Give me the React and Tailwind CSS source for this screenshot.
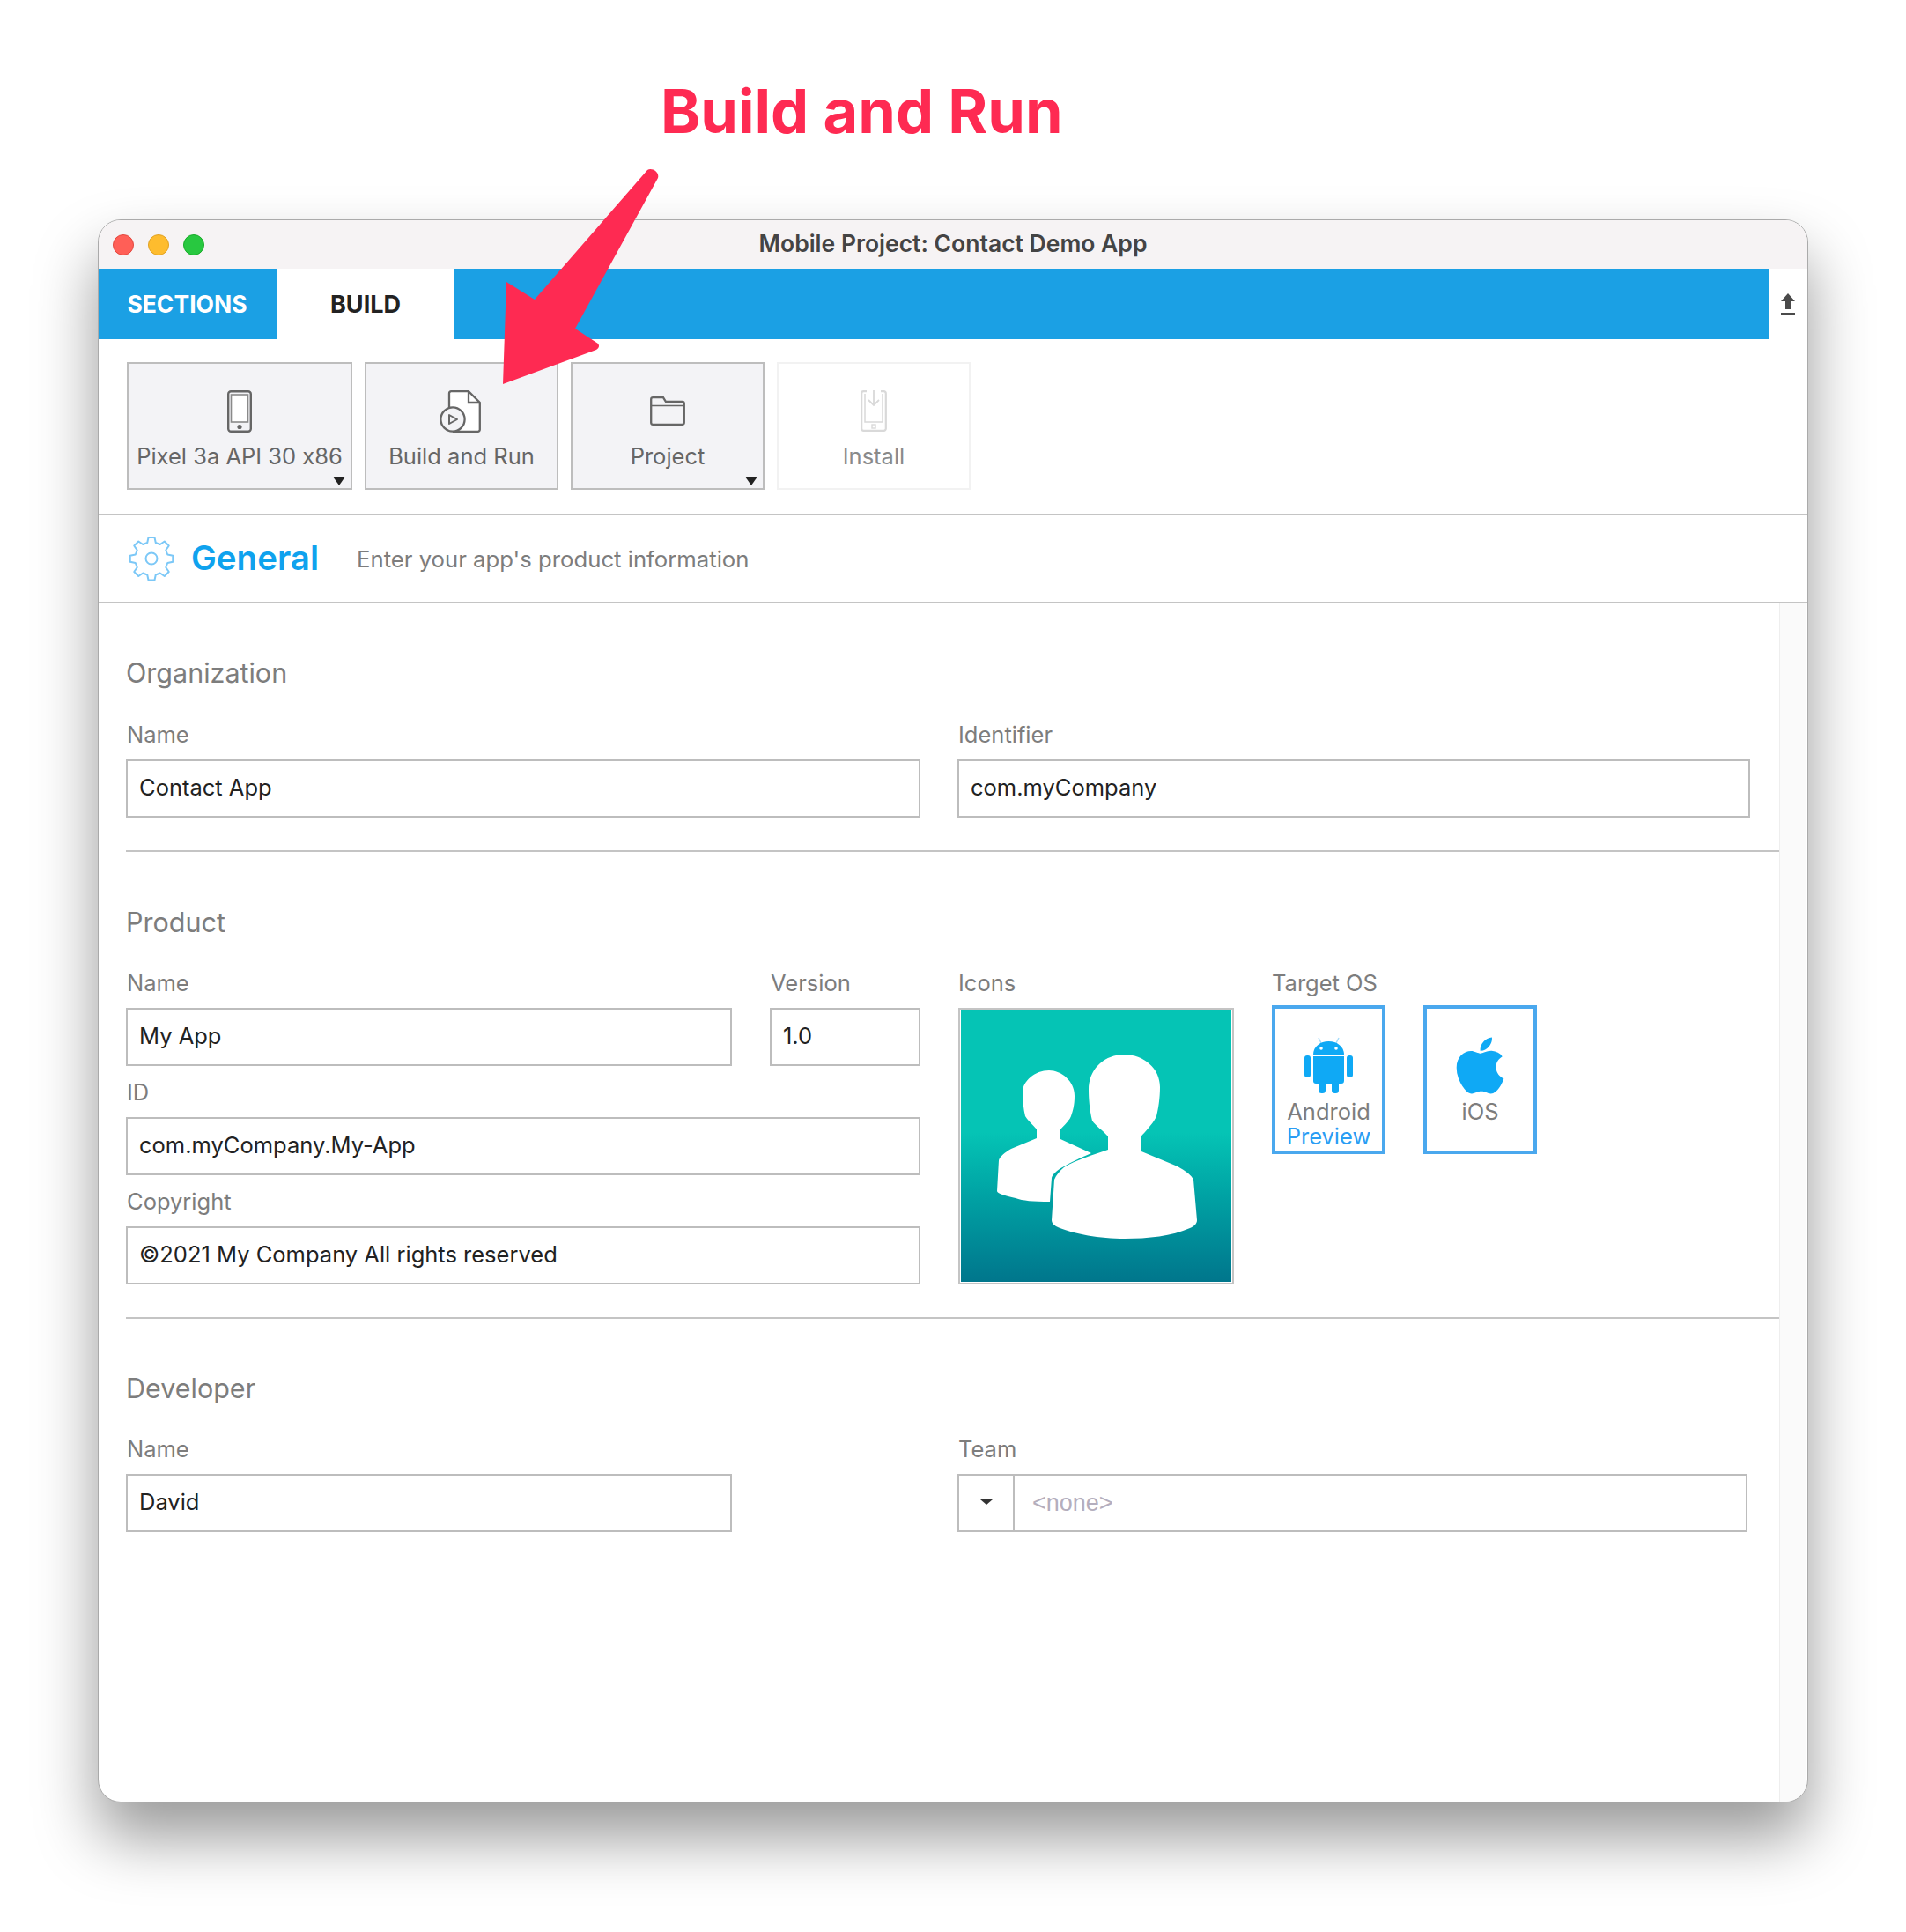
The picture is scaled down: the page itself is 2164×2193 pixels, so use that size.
import React from 'react'
import { FaApple } from 'react-icons/fa'

const Field = ({ label, value, className = '' }) => (
  <div className={className}>
    <div className="h-[44px] pl-px text-[25.5px] leading-[32px] text-[#7d7d7d]">{label}</div>
    <div className="flex h-[66px] items-center border-2 border-[#bdbdbd] pb-[2px] pl-[13px] text-[25.5px] text-[#222]">{value}</div>
  </div>
)

const Heading = ({ children }) => (
  <div className="text-[30.5px] leading-[38px] text-[#7d7d7d]">{children}</div>
)

const Caret = () => (
  <div className="absolute right-[6px] bottom-[3px] h-0 w-0 border-x-[7px] border-t-[10px] border-x-transparent border-t-[#222]" />
)

const ToolButton = ({ label, icon, caret, disabled, className = '' }) => (
  <div className={`relative flex h-[145px] flex-col items-center border-2 ${disabled ? 'border-[#f2f2f2] bg-white text-[#8a8a8a]' : 'border-[#bdbdbd] bg-[#f3f3f6] text-[#666]'} ${className}`}>
    <div className="mt-[16px] flex h-[75px] items-center justify-center">{icon}</div>
    <div className="text-[25.5px] leading-[28px] [font-feature-settings:'calt'_0]">{label}</div>
    {caret && <Caret />}
  </div>
)

const PhoneIcon = () => (
  <svg width="28" height="48" viewBox="0 0 28 48" fill="none" stroke="#666" strokeWidth="2.4">
    <rect x="1.2" y="1.2" width="25.6" height="45.6" rx="3" />
    <rect x="4.5" y="5" width="19" height="31" fill="#fff" stroke="#8a8a8a" strokeWidth="1.6" />
    <circle cx="14" cy="41.5" r="2.6" fill="#666" stroke="none" />
  </svg>
)

const BuildIcon = () => (
  <svg className="mr-[4px]" width="47" height="48" viewBox="0 0 47 48" fill="none" stroke="#666" strokeWidth="2.3">
    <path d="M11 20V3.5A2.2 2.2 0 0 1 13.2 1.2H33L45.8 14V44.5A2.2 2.2 0 0 1 43.6 46.8H15" fill="#fff" />
    <path d="M33 1.2V14H45.8" />
    <circle cx="15" cy="33" r="13.6" fill="#f3f3f6" />
    <path d="M11 28L20 33L11 38Z" strokeWidth="2" strokeLinejoin="round" />
  </svg>
)

const FolderIcon = () => (
  <svg width="40" height="33" viewBox="0 0 40 33" fill="none" stroke="#666" strokeWidth="2.3">
    <path d="M1.2 30V3A2 2 0 0 1 3.2 1.2H15L18 6H36.5A2.3 2.3 0 0 1 38.8 8.3V29.5A2.3 2.3 0 0 1 36.5 31.8H3.2A2 2 0 0 1 1.2 30Z" />
    <path d="M1.2 10.5H38.8" strokeWidth="1.6" />
  </svg>
)

const InstallIcon = () => (
  <svg width="30" height="47" viewBox="0 0 30 47" fill="none" stroke="#d9d9d9" strokeWidth="2.2">
    <path d="M7 1.2H3.5A2.3 2.3 0 0 0 1.2 3.5V43.5A2.3 2.3 0 0 0 3.5 45.8H26.5A2.3 2.3 0 0 0 28.8 43.5V3.5A2.3 2.3 0 0 0 26.5 1.2H23" />
    <path d="M5 4V36H25V4" strokeWidth="1.5" />
    <path d="M15 0V17M9 11L15 17L21 11" strokeWidth="1.8" />
    <rect x="13" y="39" width="4" height="4" strokeWidth="1.4" />
  </svg>
)

const GearIcon = () => (
  <svg width="60" height="60" viewBox="0 0 24 24" fill="none" stroke="#7cc8f7" strokeWidth="0.8" strokeLinejoin="round">
    <path d="M10.6 2.4h2.8l.5 2.4 2 .8 2-1.4 2 2-1.4 2 .8 2 2.4.5v2.8l-2.4.5-.8 2 1.4 2-2 2-2-1.4-2 .8-.5 2.4h-2.8l-.5-2.4-2-.8-2 1.4-2-2 1.4-2-.8-2-2.4-.5v-2.8l2.4-.5.8-2-1.4-2 2-2 2 1.4 2-.8z" />
    <circle cx="12" cy="12" r="2.6" />
  </svg>
)

const AndroidIcon = () => (
  <svg width="55" height="64" viewBox="0 0 55 64" fill="#0fa9f5">
    <path d="M16 1l3 6M39 1l-3 6" stroke="#a6dcfa" strokeWidth="1.5" />
    <path d="M10 20C10 11 18 5 27.5 5S45 11 45 20z" />
    <path d="M10 22H45V50A3 3 0 0 1 42 53H13A3 3 0 0 1 10 50z" />
    <rect x="0" y="21" width="7" height="25" rx="3" />
    <rect x="48" y="21" width="7" height="25" rx="3" />
    <rect x="16" y="50" width="8" height="14" rx="3.5" />
    <rect x="31" y="50" width="8" height="14" rx="3.5" />
    <circle cx="19" cy="13" r="1.8" fill="#fff" />
    <circle cx="36" cy="13" r="1.8" fill="#fff" />
  </svg>
)

const TargetBox = ({ icon, label, sub }) => (
  <div className="flex h-[169px] w-[129px] flex-col items-center border-[4px] border-[#4aa8ee] pt-[32px]">
    <div className="flex h-[64px] items-center justify-center">{icon}</div>
    <div className="mt-[7px] text-[25.5px] leading-[28px] text-[#7d7d7d]">{label}</div>
    {sub && <div className="text-[25.5px] leading-[28px] text-[#2a9df4]">{sub}</div>}
  </div>
)

const AppIcon = () => (
  <div className="h-[314px] w-[313px] border-2 border-[#c4c4c4] p-px">
    <div className="h-full w-full bg-gradient-to-b from-[#05c4b5] from-[45%] to-[#00768c]">
      <svg width="308" height="309" viewBox="0 0 308 309" fill="#fff">
        <path d="M100 68C114 68 129 80 129 97C129 108 127 114 125 120C122 127 116 131 113 135V146L148 162C134 168 124 173 117 177C108 182 104 186 103 190L101 217C82 217 70 216 62 213C50 210 41 208 41 205L43 170C44 166 50 161 57 157L86 145V135C80 128 76 125 73 120C71 112 70 102 70 93C70 80 84 68 100 68Z" />
        <path d="M185 50C208 50 226 66 226 87C226 100 224 112 222 120C219 127 213 133 209 138C206 141 205 142 205 143V160L246 177C255 182 262 187 264 192L268 238C268 242 265 245 260 247C240 256 212 259 186 259C155 259 125 253 108 245C105 243 103 241 103 238L106 192C108 187 112 182 117 178C130 170 150 164 167 158V143C161 136 153 131 149 125C146 112 145 100 145 90C145 66 163 50 185 50Z" />
      </svg>
    </div>
  </div>
)

export default function App() {
  return (
    <div className="relative h-[2193px] w-[2164px] overflow-hidden bg-white font-['Inter',sans-serif]">
      <div className="pt-[85px] pb-[1px] pl-[750px] text-[68.5px] leading-[83px] font-bold text-[#fe2a52]">
        Build and Run
      </div>

      <div className="mt-[80px] ml-[111px] flex h-[1797px] w-[1942px] flex-col overflow-hidden rounded-[26px] border border-[#aaa] bg-white shadow-[0_40px_70px_rgba(0,0,0,0.4)]">
        <div className="relative flex h-[55px] shrink-0 items-center justify-center bg-[#f6f3f4] pb-[2px] text-[26.5px] font-semibold text-[#444]">
          <div className="absolute top-[16px] left-[16px] flex gap-[16px]">
            <div className="h-[24px] w-[24px] rounded-full border border-[#e2483f] bg-[#ff5f57]" />
            <div className="h-[24px] w-[24px] rounded-full border border-[#dfa123] bg-[#febc2e]" />
            <div className="h-[24px] w-[24px] rounded-full border border-[#1aab29] bg-[#28c840]" />
          </div>
          Mobile Project: Contact Demo App
        </div>

        <div className="flex h-[80px] shrink-0 items-stretch">
          <div className="flex w-[203px] items-center justify-center bg-[#1ba0e4] pt-[2px] pr-[2px] text-[26.5px] font-bold text-white">SECTIONS</div>
          <div className="flex w-[200px] items-center justify-center bg-white pt-[2px] text-[27px] font-bold text-[#222]">BUILD</div>
          <div className="flex-1 bg-[#1ba0e4]" />
          <div className="flex w-[44px] items-center justify-center">
            <svg width="16" height="24" viewBox="0 0 16 24" fill="#4a4a4a">
              <path d="M8 0L16 9H11V18H5V9H0Z" />
              <rect x="0" y="22" width="16" height="2" />
            </svg>
          </div>
        </div>

        <div className="flex h-[200px] shrink-0 gap-[14px] border-b-2 border-[#c4c4c4] pt-[26px] pl-[32px]">
          <ToolButton label="Pixel 3a API 30 x86" icon={<PhoneIcon />} caret className="w-[256px]" />
          <ToolButton label="Build and Run" icon={<BuildIcon />} className="w-[220px]" />
          <ToolButton label="Project" icon={<FolderIcon />} caret className="w-[220px]" />
          <ToolButton label="Install" icon={<InstallIcon />} disabled className="w-[220px]" />
        </div>

        <div className="flex h-[100px] shrink-0 items-center border-b-2 border-[#c4c4c4] pl-[30px]">
          <GearIcon />
          <div className="ml-[15px] text-[38.5px] font-semibold text-[#0fa2ee]">General</div>
          <div className="ml-[43px] pt-[2px] text-[25.7px] text-[#7d7d7d]">Enter your app's product information</div>
        </div>

        <div className="relative flex-1 pt-[60px] pr-[32px] pl-[31px]">
          <div className="absolute top-0 right-[2px] bottom-0 w-[30px] border-l border-[#eee] bg-[#fafafa]" />
          <Heading>Organization</Heading>
          <div className="mt-[35px] flex gap-[42px]">
            <Field label="Name" value="Contact App" className="w-[902px]" />
            <Field label="Identifier" value="com.myCompany" className="w-[900px]" />
          </div>

          <div className="mt-[37px] border-t-2 border-[#c4c4c4]" />

          <div className="mt-[61px]">
            <Heading>Product</Heading>
          </div>
          <div className="mt-[34px] flex">
            <div className="w-[902px]">
              <div className="flex gap-[43px]">
                <Field label="Name" value="My App" className="w-[688px]" />
                <Field label="Version" value="1.0" className="w-[171px]" />
              </div>
              <Field label="ID" value="com.myCompany.My-App" className="mt-[14px]" />
              <Field label="Copyright" value="©2021 My Company All rights reserved" className="mt-[14px]" />
            </div>
            <div className="relative z-10 ml-[43px]">
              <div className="h-[44px] text-[25.5px] leading-[32px] text-[#7d7d7d]">Icons</div>
              <AppIcon />
            </div>
            <div className="relative z-10 ml-[43px]">
              <div className="h-[41px] text-[25.5px] leading-[32px] text-[#7d7d7d]">Target OS</div>
              <div className="flex gap-[43px]">
                <TargetBox icon={<AndroidIcon />} label="Android" sub="Preview" />
                <TargetBox icon={<FaApple size={73} color="#0fa9f5" />} label="iOS" />
              </div>
            </div>
          </div>

          <div className="mt-[37px] border-t-2 border-[#c4c4c4]" />

          <div className="mt-[60px]">
            <Heading>Developer</Heading>
          </div>
          <div className="mt-[34px] flex gap-[256px]">
            <Field label="Name" value="David" className="w-[688px]" />
            <div className="w-[897px]">
              <div className="h-[44px] pl-px text-[25.5px] leading-[32px] text-[#7d7d7d]">Team</div>
              <div className="flex h-[66px] items-center border-2 border-[#bdbdbd]">
                <div className="flex h-full w-[63px] items-center justify-center border-r-2 border-[#bdbdbd]">
                  <div className="mb-[3px] h-0 w-0 border-x-[7px] border-t-[6px] border-x-transparent border-t-[#333]" />
                </div>
                <div className="pl-[20px] font-['Liberation_Sans',sans-serif] text-[27px] text-[#b4aebd]">{'<none>'}</div>
              </div>
            </div>
          </div>
        </div>
      </div>

      <svg className="absolute top-0 left-0" width="760" height="450" viewBox="0 0 760 450" fill="#fe2a52">
        <path d="M735 193C740 190 749 195 747 202L653 373L679 390C681 393 680 395 677 397L571 436L575 320L607 340Z" />
      </svg>
    </div>
  )
}
